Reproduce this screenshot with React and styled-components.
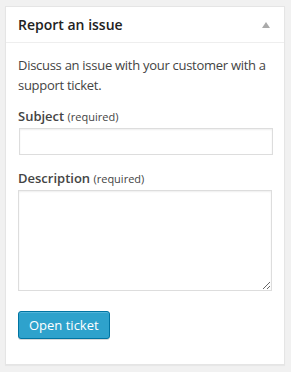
import styled, { createGlobalStyle } from 'styled-components'

const GlobalStyle = createGlobalStyle`
  body {
    margin: 0;
    background: #f1f1f1;
    font-family: "Open Sans", "Liberation Sans", sans-serif;
    color: #444;
  }
`

const Page = styled.div`
  padding: 6px 6px 8px 5px;
`

const Box = styled.div`
  background: #fff;
  border: 1px solid #e5e5e5;
  box-shadow: 0 1px 1px rgba(0, 0, 0, 0.04);
`

const Header = styled.div`
  display: flex;
  align-items: center;
  justify-content: space-between;
  padding: 8px 14px 8px 12px;
  border-bottom: 1px solid #eee;
`

const Title = styled.h3`
  margin: 0;
  font-size: 14px;
  line-height: 19px;
  font-weight: 600;
  color: #222;
`

const Toggle = styled.span`
  width: 0;
  height: 0;
  border-left: 4px solid transparent;
  border-right: 4px solid transparent;
  border-bottom: 6px solid #aaa;
`

const Inside = styled.div`
  padding: 12px 12px 25px;
`

const Intro = styled.p`
  margin: 0 0 13px;
  font-size: 13px;
  line-height: 20px;
  letter-spacing: -0.28px;
`

const Field = styled.div`
  margin-bottom: ${(props) => props.gap || 0}px;
`

const Label = styled.label`
  display: block;
  font-size: 13px;
  font-weight: 600;
  line-height: 16px;
  margin-bottom: 3px;
  color: #444;
`

const Note = styled.span`
  font-size: 11px;
  font-weight: 400;
`

const Input = styled.input`
  display: block;
  box-sizing: border-box;
  width: 254px;
  height: 27px;
  margin: 0 0 0 1px;
  border: 1px solid #ddd;
  box-shadow: inset 0 1px 2px rgba(0, 0, 0, 0.07);
  background: #fff;
  outline: none;
`

const TextArea = styled.textarea`
  display: block;
  box-sizing: border-box;
  width: 254px;
  height: 101px;
  margin: 0;
  border: 1px solid #ddd;
  box-shadow: inset 0 1px 2px rgba(0, 0, 0, 0.07);
  background: #fff;
  outline: none;
`

const Button = styled.button`
  display: block;
  box-sizing: border-box;
  height: 28px;
  padding: 0 10px 1px;
  font-family: inherit;
  font-size: 13px;
  line-height: 26px;
  color: #fff;
  background: #2ea2cc;
  border: 1px solid #0074a2;
  border-radius: 3px;
  box-shadow: inset 0 1px 0 rgba(120, 200, 230, 0.5), 0 1px 0 rgba(0, 0, 0, 0.15);
  cursor: pointer;
`

function App() {
  return (
    <>
      <GlobalStyle />
      <Page>
        <Box>
          <Header>
            <Title>Report an issue</Title>
            <Toggle />
          </Header>
          <Inside>
            <Intro>Discuss an issue with your customer with a support ticket.</Intro>
            <Field gap={15}>
              <Label>
                Subject <Note>(required)</Note>
              </Label>
              <Input type="text" />
            </Field>
            <Field gap={20}>
              <Label>
                Description <Note>(required)</Note>
              </Label>
              <TextArea />
            </Field>
            <Button>Open ticket</Button>
          </Inside>
        </Box>
      </Page>
    </>
  )
}

export default App
